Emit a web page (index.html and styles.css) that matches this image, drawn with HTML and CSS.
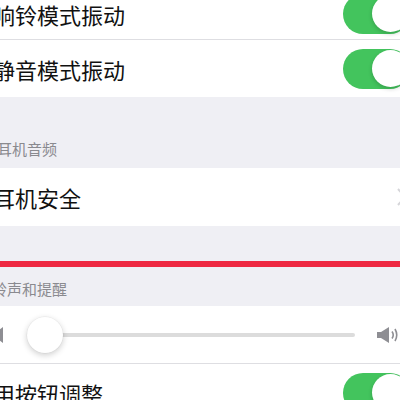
FILE: index.html
```html
<!DOCTYPE html>
<html lang="zh-CN">
<head>
<meta charset="utf-8">
<title>声音与触感</title>
<link rel="stylesheet" href="styles.css">
</head>
<body>
<div class="page">
  <div class="row row-first sep">
    <span class="label">响铃模式振动</span>
    <span class="switch"><span class="knob"></span></span>
  </div>
  <div class="row">
    <span class="label">静音模式振动</span>
    <span class="switch"><span class="knob"></span></span>
  </div>
  <div class="group group-one">
    <span class="header">耳机音频</span>
  </div>
  <div class="row row-nav">
    <span class="label">耳机安全</span>
    <svg class="chevron" width="9" height="18" viewBox="0 0 9 18"><path d="M1 1 L8 9 L1 17" fill="none" stroke="#d6d6da" stroke-width="2"/></svg>
  </div>
  <div class="group group-two">
    <div class="mark"></div>
    <span class="header header-two">铃声和提醒</span>
  </div>
  <div class="row slider-row sep">
    <svg class="spk spk-low" width="14" height="16" viewBox="0 0 14 16"><path d="M0 5 H4 L11 0 V16 L4 11 H0 Z" fill="#8e8e93"/></svg>
    <div class="slider">
      <div class="track"></div>
      <div class="thumb"></div>
    </div>
    <svg class="spk spk-high" width="21" height="16" viewBox="0 0 21 16"><path d="M0 5 H4 L12 0 V16 L4 11 H0 Z" fill="#8e8e93"/><path d="M15 4.5 Q17.5 8 15 11.5" fill="none" stroke="#8e8e93" stroke-width="1.6"/><path d="M18 2 Q21.5 8 18 14" fill="none" stroke="#8e8e93" stroke-width="1.6"/></svg>
  </div>
  <div class="row">
    <span class="label">用按钮调整</span>
    <span class="switch"><span class="knob"></span></span>
  </div>
</div>
</body>
</html>
```
FILE: styles.css
```css
html, body {
  margin: 0;
  padding: 0;
  background: #efeff4;
  overflow: hidden;
  width: 400px;
  height: 400px;
}

.page {
  width: 420px;
  margin-left: -8px;
  margin-top: -14px;
  font-family: "Noto Sans CJK SC", "Noto Sans", sans-serif;
}

.row {
  display: flex;
  align-items: center;
  box-sizing: border-box;
  height: 57px;
  background: #fff;
  padding: 0 2px 0 1px;
}

.row-first {
  height: 54px;
  padding-top: 2px;
}

.row-nav {
  height: 58px;
  padding-right: 6px;
}

.sep {
  border-bottom: 1px solid #dedee2;
}

.label {
  flex: 1;
  font-size: 22px;
  line-height: 30px;
  color: #111;
}

.switch {
  position: relative;
  width: 67px;
  height: 40px;
  border-radius: 20px;
  background: #43c45d;
  flex: none;
}

.knob {
  position: absolute;
  right: 1.5px;
  top: 1.5px;
  width: 37px;
  height: 37px;
  border-radius: 50%;
  background: #fff;
  box-shadow: 0 2px 4px rgba(0, 0, 0, 0.18);
}

.chevron {
  flex: none;
}

.group {
  display: flex;
  flex-direction: column;
  justify-content: flex-end;
  box-sizing: border-box;
  background: #efeff4;
  padding-left: 5px;
}

.group-one {
  height: 71px;
  padding-bottom: 9px;
}

.group-two {
  height: 80px;
  padding-top: 35px;
  padding-left: 0;
  justify-content: flex-start;
}

.header {
  font-size: 15px;
  line-height: 20px;
  color: #8a8a8f;
}

.header-two {
  margin-top: 12px;
  padding-left: 0;
}

.mark {
  height: 6px;
  background: #ee2841;
}

.slider-row {
  height: 58px;
  padding: 0 14px 0 0;
}

.spk {
  flex: none;
}

.slider {
  position: relative;
  flex: 1;
  height: 36px;
  margin: 0 22px 0 21px;
  display: flex;
  align-items: center;
}

.track {
  flex: 1;
  height: 4px;
  border-radius: 2px;
  background: #dcdcdc;
}

.thumb {
  position: absolute;
  left: 0;
  top: 0;
  width: 36px;
  height: 36px;
  border-radius: 50%;
  background: #fff;
  box-shadow: 0 2px 6px rgba(0, 0, 0, 0.2), 0 0 0 0.5px rgba(0, 0, 0, 0.06);
}
```
